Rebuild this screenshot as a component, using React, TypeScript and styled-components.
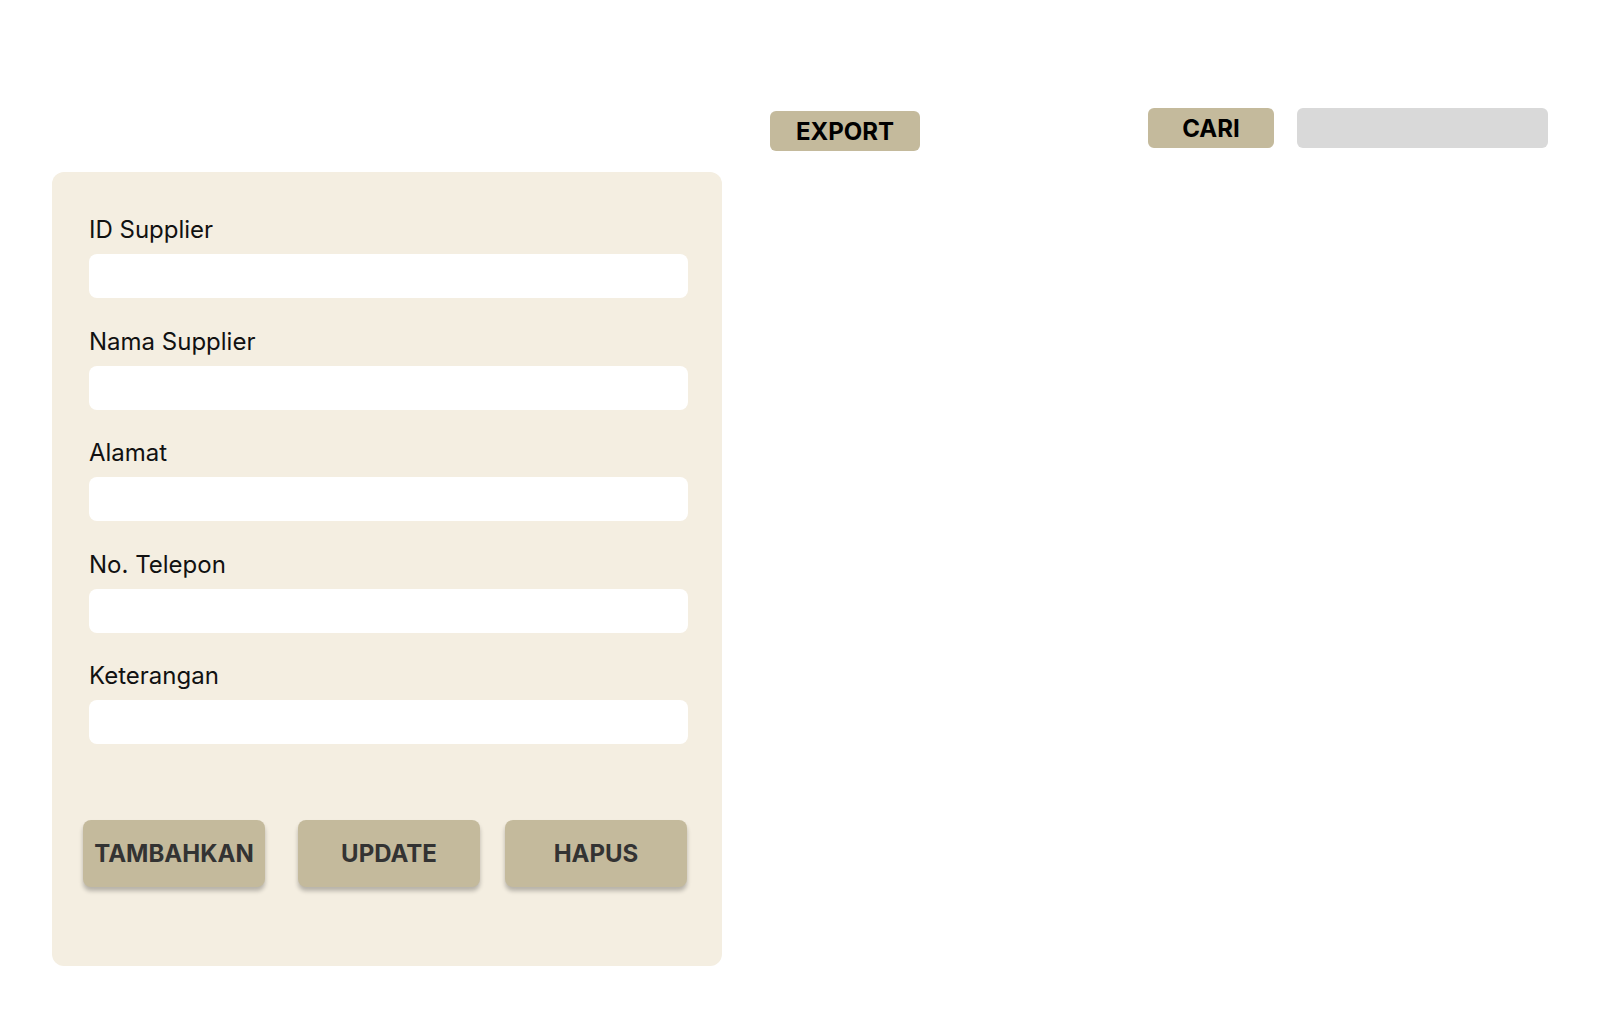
import React from 'react'
import styled, { createGlobalStyle } from 'styled-components'

const fields = ['ID Supplier', 'Nama Supplier', 'Alamat', 'No. Telepon', 'Keterangan']

export default function App() {
  return (
    <>
      <GlobalStyle />
      <Page>
        <Toolbar>
          <ExportButton>EXPORT</ExportButton>
          <SearchGroup>
            <SmallButton>CARI</SmallButton>
            <SearchBox type="text" />
          </SearchGroup>
        </Toolbar>
        <Panel>
          <Fields>
            {fields.map((f) => (
              <Field key={f}>
                <Label>{f}</Label>
                <Input type="text" />
              </Field>
            ))}
          </Fields>
          <Actions>
            <ActionButton>TAMBAHKAN</ActionButton>
            <ActionButton>UPDATE</ActionButton>
            <ActionButton>HAPUS</ActionButton>
          </Actions>
        </Panel>
      </Page>
    </>
  )
}

const GlobalStyle = createGlobalStyle`
  body {
    margin: 0;
    background: #ffffff;
    font-family: Inter, "Noto Sans", sans-serif;
  }
`

const Page = styled.div`
  width: 1600px;
  min-height: 1010px;
  box-sizing: border-box;
  padding: 108px 52px 0 52px;
`

const Toolbar = styled.div`
  display: flex;
  align-items: flex-start;
  padding-left: 718px;
`

const SmallButton = styled.button`
  height: 40px;
  width: 126px;
  border: none;
  border-radius: 6px;
  background: #c4ba9c;
  color: #000;
  font-family: Inter, sans-serif;
  font-size: 24px;
  font-weight: 700;
  padding: 0;
  cursor: pointer;
`

const ExportButton = styled(SmallButton)`
  width: 150px;
  margin-top: 3px;
`

const SearchGroup = styled.div`
  margin-left: auto;
  display: flex;
  gap: 23px;
`

const SearchBox = styled.input`
  width: 251px;
  height: 40px;
  box-sizing: border-box;
  border: none;
  border-radius: 6px;
  background: #d9d9d9;
  outline: none;
`

const Panel = styled.div`
  margin-top: 21px;
  width: 670px;
  height: 794px;
  box-sizing: border-box;
  padding: 44px 34px 0 37px;
  background: #f4eee1;
  border-radius: 12px;
`

const Fields = styled.div`
  display: flex;
  flex-direction: column;
  gap: 29.5px;
`

const Field = styled.div`
  display: flex;
  flex-direction: column;
  gap: 11px;
`

const Label = styled.label`
  font-size: 24px;
  line-height: 27px;
  color: #111;
`

const Input = styled.input`
  height: 44px;
  box-sizing: border-box;
  border: none;
  border-radius: 8px;
  background: #ffffff;
  outline: none;
  padding: 0 12px;
  font-size: 18px;
`

const Actions = styled.div`
  margin: 76px 0 0 -6px;
  display: flex;
  gap: 33px;
`

const ActionButton = styled.button`
  width: 182px;
  height: 67px;
  border: none;
  border-radius: 8px;
  background: #c4ba9c;
  color: #333;
  font-family: Inter, sans-serif;
  font-size: 24px;
  font-weight: 700;
  box-shadow: 0 4px 4px rgba(0, 0, 0, 0.25);
  cursor: pointer;

  &:last-child {
    margin-left: -8px;
  }
`
